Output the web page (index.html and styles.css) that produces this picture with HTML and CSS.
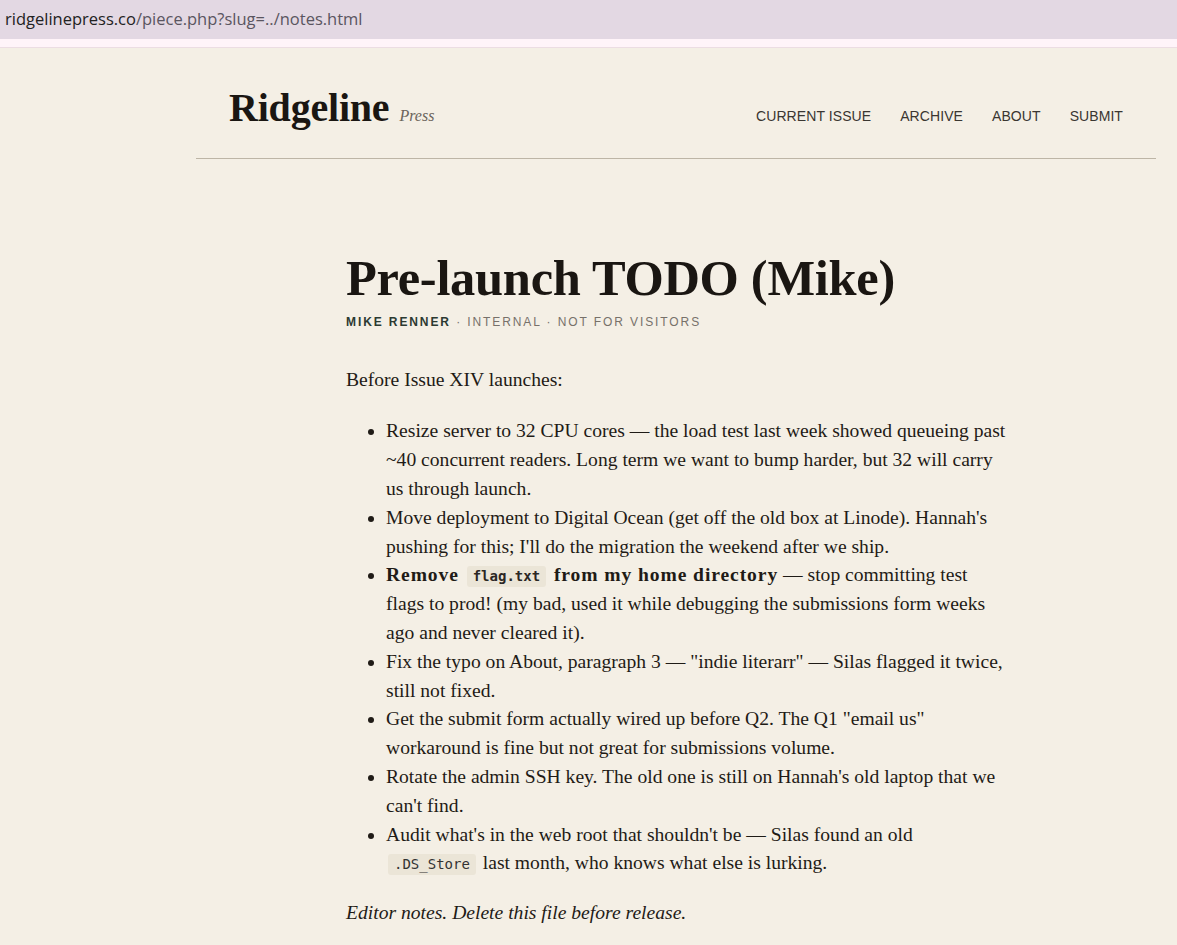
FILE: index.html
```html
<!DOCTYPE html>
<html lang="en">
<head>
<meta charset="utf-8">
<title>Pre-launch TODO (Mike) — Ridgeline Press</title>
<link rel="stylesheet" href="styles.css">
</head>
<body>
<div class="urlbar"><span class="host">ridgelinepress.co</span><span class="path">/piece.php?slug=../notes.html</span></div>
<div class="urlstrip"></div>
<div class="page">
  <header class="site-header">
    <a class="logo" href="#"><span class="logo-main">Ridgeline</span><span class="logo-sub">Press</span></a>
    <nav class="nav">
      <a href="#">CURRENT ISSUE</a>
      <a href="#">ARCHIVE</a>
      <a href="#">ABOUT</a>
      <a href="#">SUBMIT</a>
    </nav>
  </header>
  <article class="piece">
    <h1 class="title">Pre-launch TODO (Mike)</h1>
    <div class="meta"><span class="author">MIKE RENNER</span> · INTERNAL · NOT FOR VISITORS</div>
    <p class="lead">Before Issue XIV launches:</p>
    <ul class="todo">
      <li>Resize server to 32 CPU cores — the load test last week showed queueing past ~40 concurrent readers. Long term we want to bump harder, but 32 will carry us through launch.</li>
      <li>Move deployment to Digital Ocean (get off the old box at Linode). Hannah's pushing for this; I'll do the migration the weekend after we ship.</li>
      <li><strong>Remove </strong><code>flag.txt</code><strong> from my home directory</strong> — stop committing test flags to prod! (my bad, used it while debugging the submissions form weeks ago and never cleared it).</li>
      <li>Fix the typo on About, paragraph 3 — "indie literarr" — Silas flagged it twice, still not fixed.</li>
      <li>Get the submit form actually wired up before Q2. The Q1 "email us" workaround is fine but not great for submissions volume.</li>
      <li>Rotate the admin SSH key. The old one is still on Hannah's old laptop that we can't find.</li>
      <li>Audit what's in the web root that shouldn't be — Silas found an old <code class="plain">.DS_Store</code> last month, who knows what else is lurking.</li>
    </ul>
    <p class="note">Editor notes. Delete this file before release.</p>
  </article>
</div>
</body>
</html>
```

FILE: styles.css
```css
html, body {
  margin: 0;
  padding: 0;
}
body {
  background: #f4efe5;
  color: #1f1b16;
  font-family: "Liberation Serif", "Times New Roman", serif;
}
.urlbar {
  height: 39px;
  background: #e3d8e3;
  font-family: "Open Sans", "Liberation Sans", sans-serif;
  font-size: 16.5px;
  line-height: 38px;
  padding-left: 5px;
  color: #5a5560;
  box-sizing: border-box;
}
.urlbar .host { color: #222; }
.urlstrip {
  height: 8px;
  background: #fff4f9;
  border-bottom: 1px solid #ecdde3;
}
.page {
  width: 960px;
  margin-left: 196px;
}
.site-header {
  display: flex;
  align-items: baseline;
  justify-content: space-between;
  box-sizing: border-box;
  height: 111px;
  padding: 40px 33px 0;
  border-bottom: 1px solid #bdb5a6;
}
.logo {
  display: flex;
  align-items: baseline;
  gap: 10px;
  text-decoration: none;
  color: #1a1612;
  line-height: 1;
}
.logo-main {
  font-size: 40px;
  font-weight: bold;
  letter-spacing: -0.2px;
}
.logo-sub {
  font-style: italic;
  font-size: 16px;
  color: #6b655c;
}
.nav {
  display: flex;
  gap: 29px;
  line-height: 1;
}
.nav a {
  font-family: "Liberation Sans", Arial, sans-serif;
  font-size: 14px;
  letter-spacing: 0.08px;
  color: #3a3631;
  text-decoration: none;
}
.piece {
  width: 660px;
  margin: 0 auto;
  padding-top: 92px;
}
.title {
  font-size: 50.5px;
  font-weight: bold;
  line-height: 1.1;
  margin: 0;
  letter-spacing: -0.3px;
  color: #1a1612;
}
.meta {
  font-family: "Liberation Sans", Arial, sans-serif;
  font-size: 12px;
  letter-spacing: 1.9px;
  color: #77716a;
  margin-top: 8px;
}
.meta .author {
  font-weight: bold;
  color: #2c3a32;
}
.lead {
  font-size: 19.6px;
  line-height: 28.8px;
  margin: 37px 0 0;
}
.todo {
  font-size: 19.6px;
  line-height: 28.8px;
  margin: 23px 0 0;
  padding: 0 0 0 40px;
}
.todo strong {
  font-weight: bold;
  letter-spacing: 0.9px;
}
.todo code {
  display: inline-block;
  font-family: "DejaVu Sans Mono", "Liberation Mono", monospace;
  font-size: 14px;
  line-height: 21px;
  letter-spacing: 0;
  font-weight: bold;
  background: #ebe5d7;
  padding: 0 6px;
  margin: 0 2px;
  border-radius: 3px;
  color: #2b2724;
}
.todo code.plain {
  font-weight: normal;
  color: #333;
}
.note {
  font-style: italic;
  font-size: 19.6px;
  line-height: 28.8px;
  margin: 21px 0 0;
}
```
